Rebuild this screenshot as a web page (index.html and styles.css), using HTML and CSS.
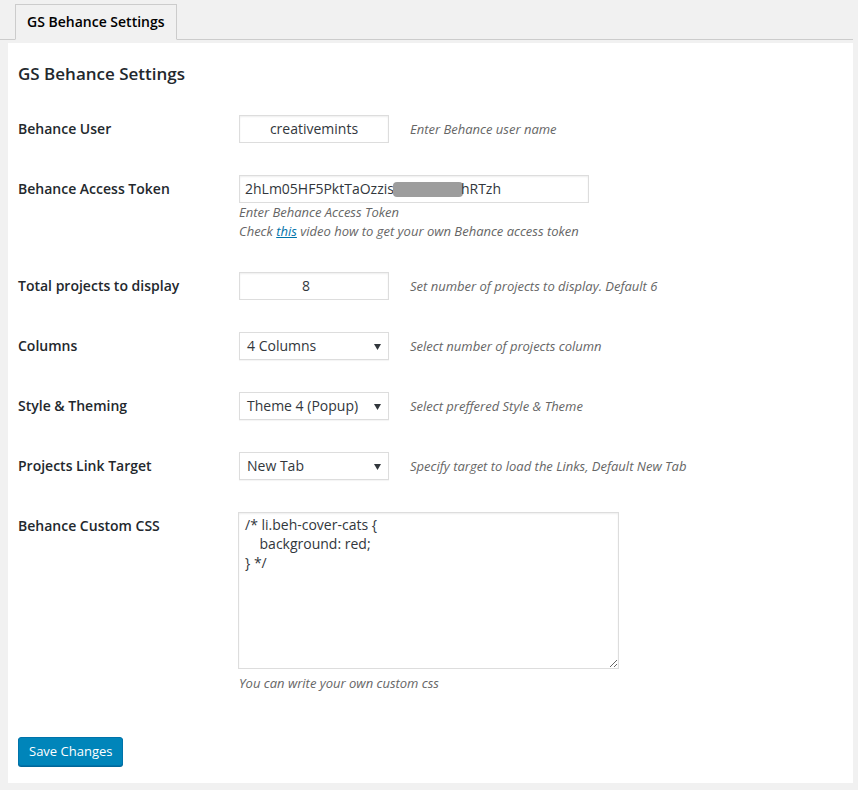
FILE: index.html
```html
<!DOCTYPE html>
<html>
<head>
<meta charset="utf-8">
<title>GS Behance Settings</title>
<link rel="stylesheet" href="styles.css">
</head>
<body>
<div class="wrap">
  <nav class="tabs">
    <a class="tab active">GS Behance Settings</a>
  </nav>
  <div class="panel">
    <h2 class="title">GS Behance Settings</h2>
    <div class="form">
      <div class="row">
        <div class="label">Behance User</div>
        <div class="field inline">
          <div class="input small center">creativemints</div>
          <span class="desc side">Enter Behance user name</span>
        </div>
      </div>
      <div class="row tight">
        <div class="label">Behance Access Token</div>
        <div class="field">
          <div class="input wide">2hLm05HF5PktTaOzzis<span class="blur"></span>hRTzh</div>
          <div class="desc">Enter Behance Access Token</div>
          <div class="desc">Check <a class="link">this</a> video how to get your own Behance access token</div>
        </div>
      </div>
      <div class="row">
        <div class="label">Total projects to display</div>
        <div class="field inline">
          <div class="input small center number">8</div>
          <span class="desc side">Set number of projects to display. Default 6</span>
        </div>
      </div>
      <div class="row">
        <div class="label">Columns</div>
        <div class="field inline">
          <div class="input small select"><span>4 Columns</span><svg class="arrow" width="7" height="6" viewBox="0 0 7 6"><path d="M0 0H7L3.5 6Z" fill="#32373c"/></svg></div>
          <span class="desc side">Select number of projects column</span>
        </div>
      </div>
      <div class="row">
        <div class="label">Style &amp; Theming</div>
        <div class="field inline">
          <div class="input small select"><span>Theme 4 (Popup)</span><svg class="arrow" width="7" height="6" viewBox="0 0 7 6"><path d="M0 0H7L3.5 6Z" fill="#32373c"/></svg></div>
          <span class="desc side">Select preffered Style &amp; Theme</span>
        </div>
      </div>
      <div class="row">
        <div class="label">Projects Link Target</div>
        <div class="field inline">
          <div class="input small select"><span>New Tab</span><svg class="arrow" width="7" height="6" viewBox="0 0 7 6"><path d="M0 0H7L3.5 6Z" fill="#32373c"/></svg></div>
          <span class="desc side">Specify target to load the Links, Default New Tab</span>
        </div>
      </div>
      <div class="row">
        <div class="label">Behance Custom CSS</div>
        <div class="field">
          <textarea class="code">/* li.beh-cover-cats {
    background: red;
} */</textarea>
          <div class="desc after">You can write your own custom css</div>
        </div>
      </div>
    </div>
    <button class="save">Save Changes</button>
  </div>
</div>
</body>
</html>
```
FILE: styles.css
```css
html, body {
  margin: 0;
  padding: 0;
  background: #f1f1f1;
  font-family: "Open Sans", "Noto Sans", sans-serif;
  color: #23282d;
  font-size: 14px;
}

.wrap {
  margin-right: 5px;
}

.tabs {
  display: flex;
  padding: 4px 0 0 15px;
  border-bottom: 1px solid #ccc;
  height: 35px;
}

.tab {
  display: block;
  box-sizing: border-box;
  height: 36px;
  padding: 0 11px;
  border: 1px solid #ccc;
  border-bottom: 1px solid #f1f1f1;
  background: #f1f1f1;
  font-size: 14px;
  font-weight: 600;
  line-height: 33px;
  color: #000;
}

.panel {
  margin: 3px 0 0 8px;
  background: #fff;
  padding: 19px 10px 17px 10px;
}

.title {
  margin: 0 0 13px;
  font-size: 17px;
  font-weight: 600;
  line-height: 24px;
  color: #23282d;
}

.row {
  display: flex;
  padding: 16px 0;
}

.row.tight {
  padding-bottom: 15px;
}

.label {
  width: 221px;
  flex: none;
  font-weight: 600;
  line-height: 28px;
  color: #23282d;
}

.field.inline {
  display: flex;
  align-items: center;
  height: 28px;
}

.input {
  box-sizing: border-box;
  height: 28px;
  border: 1px solid #ddd;
  box-shadow: inset 0 1px 2px rgba(0,0,0,.07);
  background: #fff;
  color: #32373c;
  font-size: 14px;
  line-height: 26px;
  padding: 0 5px;
  white-space: nowrap;
}

.input.small {
  width: 150px;
}

.input.wide {
  width: 350px;
  display: flex;
  align-items: center;
}

.input.center {
  text-align: center;
}

.input.number {
  padding-right: 21px;
}

.input.select {
  display: flex;
  align-items: center;
  justify-content: space-between;
  padding: 0 7px 0 7px;
  box-shadow: 0 1px 1px rgba(0,0,0,.04);
}

.arrow {
  display: block;
  margin-top: 1px;
}

.blur {
  display: inline-block;
  width: 70px;
  height: 15px;
  border-radius: 4px;
  background: #9d9d9d;
  margin-left: -1px;
  margin-right: -2px;
}

.desc {
  font-size: 13px;
  font-style: italic;
  color: #666;
  line-height: 19px;
}

.desc.side {
  margin-left: 21px;
}

.desc.after {
  margin-top: 5px;
}

.link {
  color: #0073aa;
  text-decoration: underline;
}

.code {
  display: block;
  box-sizing: border-box;
  width: 381px;
  height: 157px;
  margin: 0 0 0 -1px;
  border: 1px solid #ddd;
  box-shadow: inset 0 1px 2px rgba(0,0,0,.07);
  padding: 2px 6px;
  font-family: "Open Sans", "Noto Sans", sans-serif;
  font-size: 14px;
  line-height: 19px;
  color: #32373c;
  outline: none;
}

.save {
  display: block;
  margin-top: 28px;
  height: 29px;
  box-sizing: border-box;
  padding: 0 10px 1px;
  background: #0085ba;
  border: 1px solid #0073aa;
  border-radius: 3px;
  box-shadow: 0 1px 0 #006799;
  color: #fff;
  font-family: "Open Sans", "Noto Sans", sans-serif;
  font-size: 13px;
  line-height: 26px;
  cursor: pointer;
}
```
